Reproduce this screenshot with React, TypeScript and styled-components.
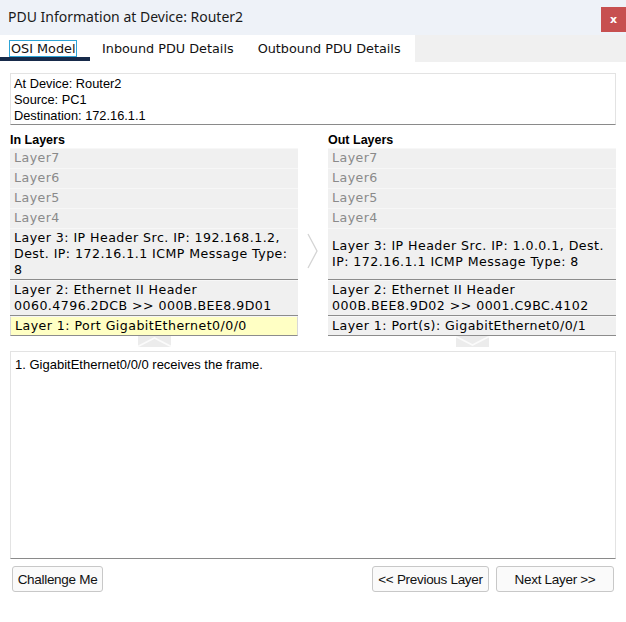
import React from "react";
import styled, { createGlobalStyle } from "styled-components";

const Global = createGlobalStyle`
  html, body { margin: 0; padding: 0; background: #ffffff; }
  * { box-sizing: border-box; }
`;

const Window = styled.div`
  width: 626px;
  height: 622px;
  display: flex;
  flex-direction: column;
  background: #ffffff;
  overflow: hidden;
`;

const TitleBar = styled.div`
  height: 35px;
  background: #eef2f8;
  display: flex;
  align-items: center;
  justify-content: space-between;
  padding-left: 8px;
`;

const Title = styled.div`
  font-family: "Noto Sans", "Open Sans", sans-serif;
  font-size: 14px;
  color: #1a1a1a;
  margin-top: -2px;
`;

const CloseButton = styled.div`
  width: 25px;
  height: 25px;
  background: #c75050;
  color: #ffffff;
  font-family: "DejaVu Sans", sans-serif;
  font-weight: bold;
  font-size: 11px;
  display: flex;
  align-items: center;
  justify-content: center;
  align-self: flex-start;
  margin-top: 7px;
`;

const TabBar = styled.div`
  height: 27px;
  display: flex;
  background: #f0f0f0;
`;

const TabStrip = styled.div`
  width: 415px;
  background: #ffffff;
  display: flex;
  align-items: flex-start;
`;

const Tab = styled.div<{ $active?: boolean }>`
  position: relative;
  height: 27px;
  padding: 6px 12px 0 ${(p) => (p.$active ? "10px" : "12px")};
  font-family: "DejaVu Sans", Verdana, sans-serif;
  font-size: 12.8px;
  color: #111;
  ${(p) =>
    p.$active
      ? `
    width: 90px;
    &::after {
      content: "";
      position: absolute;
      left: 0; right: 0; bottom: 1px;
      height: 4px;
      background: #172a4a;
    }`
      : ""}
`;

const FocusLabel = styled.span`
  outline: 1px solid #2ea4d6;
  outline-offset: 0px;
  padding: 0 1px;
`;

const Content = styled.div`
  flex: 1;
  display: flex;
  flex-direction: column;
  padding: 11px 10px 0 10px;
`;

const InfoBox = styled.div`
  height: 52px;
  border: 1px solid #e3e3e3;
  border-bottom: 1px solid #8a8a8a;
  padding: 2px 3px 0;
  font-family: "Liberation Sans", Arial, sans-serif;
  font-size: 12.8px;
  line-height: 16px;
  color: #000;
`;

const Columns = styled.div`
  display: grid;
  grid-template-columns: 288px 30px 288px;
  margin-top: 8px;
`;

const Column = styled.div`
  display: flex;
  flex-direction: column;
`;

const ColumnTitle = styled.div`
  font-family: "Liberation Sans", Arial, sans-serif;
  font-weight: bold;
  font-size: 12.5px;
  height: 15px;
  line-height: 15px;
  color: #000;
`;

const LayerRow = styled.div<{ $h: number; $dim?: boolean; $hl?: boolean; $dark?: boolean }>`
  height: ${(p) => p.$h}px;
  display: flex;
  flex-direction: column;
  justify-content: center;
  padding: 0 4px;
  background: ${(p) => (p.$hl ? "#ffffc4" : "#f0f0f0")};
  color: ${(p) => (p.$dim ? "#8a8a8a" : "#000")};
  border-top: 1px solid ${(p) => (p.$hl ? "#f6f6f6" : "#f7f7f7")};
  border-bottom: 1px solid ${(p) => (p.$dark ? "#8c8c8c" : "#f0f0f0")};
  ${(p) => (p.$hl ? "border-left: 1px solid #d8d8d8; border-right: 1px solid #d8d8d8;" : "")}
  font-family: "DejaVu Sans", Verdana, sans-serif;
  font-size: 12.6px;
  letter-spacing: 0.45px;
  line-height: 16px;
  white-space: nowrap;
`;

const MidArrow = styled.div`
  display: flex;
  justify-content: center;
  padding-top: 100px;
`;

const ArrowRow = styled.div`
  height: 15px;
  display: flex;
  justify-content: center;
  align-items: flex-start;
`;

const MessageBox = styled.div`
  height: 208px;
  border: 1px solid #e3e3e3;
  border-bottom: 1px solid #8a8a8a;
  padding: 5px 4px;
  font-family: "Liberation Sans", Arial, sans-serif;
  font-size: 13px;
  line-height: 16px;
  color: #000;
`;

const ButtonRow = styled.div`
  display: flex;
  align-items: center;
  gap: 7px;
  margin-top: 7px;
  padding: 0 2px;
`;

const Spacer = styled.div`
  flex: 1;
`;

const Button = styled.button<{ $w: number }>`
  width: ${(p) => p.$w}px;
  height: 26px;
  border: 1px solid #c8c8c8;
  border-radius: 3px;
  background: #fafafa;
  font-family: "Liberation Sans", Arial, sans-serif;
  font-size: 13.5px;
  color: #111;
  padding: 0;
  letter-spacing: -0.3px;
`;

const ChevronRight = () => (
  <svg width="12" height="36" viewBox="0 0 12 36">
    <polyline points="1,1 10,18 1,35" fill="none" stroke="#d4d4d4" strokeWidth="1.3" />
  </svg>
);

const ChevronUp = () => (
  <svg width="33" height="11" viewBox="0 0 33 11">
    <rect x="0" y="0" width="33" height="11" fill="#ececec" />
    <polyline points="0,10.5 16.5,2 33,10.5" fill="none" stroke="#fbfbfb" strokeWidth="1.6" />
  </svg>
);

const ChevronDown = () => (
  <svg width="33" height="11" viewBox="0 0 33 11">
    <rect x="0" y="0" width="33" height="11" fill="#ececec" />
    <polyline points="0,0.5 16.5,9 33,0.5" fill="none" stroke="#fbfbfb" strokeWidth="1.6" />
  </svg>
);

type Layer = { lines: string[]; h: number; dim?: boolean; hl?: boolean; dark?: boolean };

const inLayers: Layer[] = [
  { lines: ["Layer7"], h: 20, dim: true },
  { lines: ["Layer6"], h: 20, dim: true },
  { lines: ["Layer5"], h: 20, dim: true },
  { lines: ["Layer4"], h: 20, dim: true },
  {
    lines: ["Layer 3: IP Header Src. IP: 192.168.1.2,", "Dest. IP: 172.16.1.1 ICMP Message Type:", "8"],
    h: 52,
    dark: true,
  },
  { lines: ["Layer 2: Ethernet II Header", "0060.4796.2DCB >> 000B.BEE8.9D01"], h: 36, dark: true },
  { lines: ["Layer 1: Port GigabitEthernet0/0/0"], h: 20, hl: true, dark: true },
];

const outLayers: Layer[] = [
  { lines: ["Layer7"], h: 20, dim: true },
  { lines: ["Layer6"], h: 20, dim: true },
  { lines: ["Layer5"], h: 20, dim: true },
  { lines: ["Layer4"], h: 20, dim: true },
  { lines: ["Layer 3: IP Header Src. IP: 1.0.0.1, Dest.", "IP: 172.16.1.1 ICMP Message Type: 8"], h: 52, dark: true },
  { lines: ["Layer 2: Ethernet II Header", "000B.BEE8.9D02 >> 0001.C9BC.4102"], h: 36, dark: true },
  { lines: ["Layer 1: Port(s): GigabitEthernet0/0/1"], h: 20, dark: true },
];

const LayerList = ({ layers }: { layers: Layer[] }) => (
  <>
    {layers.map((l, i) => (
      <LayerRow key={i} $h={l.h} $dim={l.dim} $hl={l.hl} $dark={l.dark}>
        {l.lines.map((t, j) => (
          <div key={j}>{t}</div>
        ))}
      </LayerRow>
    ))}
  </>
);

export default function App() {
  return (
    <>
      <Global />
      <Window>
        <TitleBar>
          <Title>PDU Information at Device: Router2</Title>
          <CloseButton>x</CloseButton>
        </TitleBar>
        <TabBar>
          <TabStrip>
            <Tab $active>
              <FocusLabel>OSI Model</FocusLabel>
            </Tab>
            <Tab>Inbound PDU Details</Tab>
            <Tab>Outbound PDU Details</Tab>
          </TabStrip>
        </TabBar>
        <Content>
          <InfoBox>
            <div>At Device: Router2</div>
            <div>Source: PC1</div>
            <div>Destination: 172.16.1.1</div>
          </InfoBox>
          <Columns>
            <Column>
              <ColumnTitle>In Layers</ColumnTitle>
              <LayerList layers={inLayers} />
              <ArrowRow>
                <ChevronUp />
              </ArrowRow>
            </Column>
            <MidArrow>
              <ChevronRight />
            </MidArrow>
            <Column>
              <ColumnTitle>Out Layers</ColumnTitle>
              <LayerList layers={outLayers} />
              <ArrowRow>
                <ChevronDown />
              </ArrowRow>
            </Column>
          </Columns>
          <MessageBox>1. GigabitEthernet0/0/0 receives the frame.</MessageBox>
          <ButtonRow>
            <Button $w={91}>Challenge Me</Button>
            <Spacer />
            <Button $w={117}>&lt;&lt; Previous Layer</Button>
            <Button $w={118}>Next Layer &gt;&gt;</Button>
          </ButtonRow>
        </Content>
      </Window>
    </>
  );
}
